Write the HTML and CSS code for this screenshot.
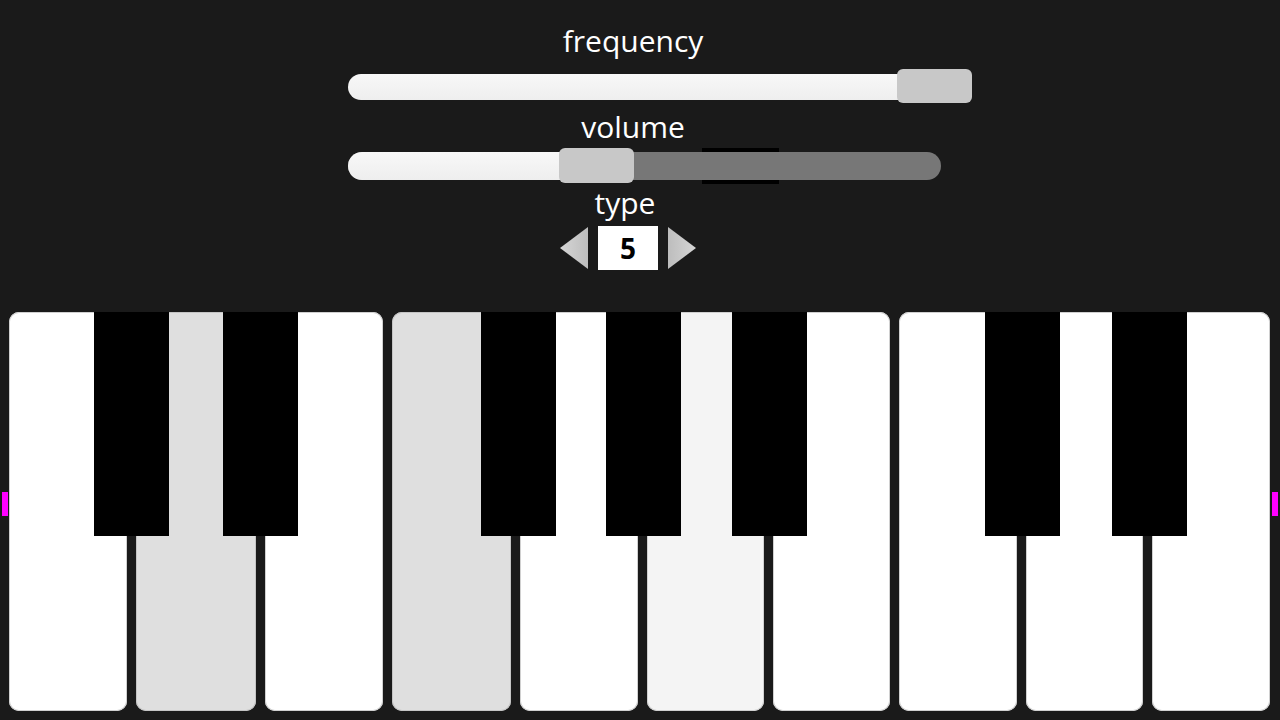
FILE: index.html
```html
<!DOCTYPE html>
<html>
<head>
<meta charset="utf-8">
<link rel="stylesheet" href="styles.css">
</head>
<body>
<div class="screen">
  <div class="controls">
    <div class="label label-freq">frequency</div>
    <div class="slider slider-freq">
      <div class="track track-freq"></div>
      <div class="handle handle-freq"></div>
    </div>
    <div class="label label-vol">volume</div>
    <div class="slider slider-vol">
      <div class="shadow-rect"></div>
      <div class="track track-vol"><div class="fill"></div></div>
      <div class="handle handle-vol"></div>
    </div>
    <div class="type-group">
      <div class="label label-type">type</div>
      <div class="type-row">
        <svg class="arrow" width="28" height="44" viewBox="0 0 28 44"><defs><linearGradient id="ga" x1="0" y1="0" x2="1" y2="0"><stop offset="0" stop-color="#d6d6d6"/><stop offset="1" stop-color="#bdbdbd"/></linearGradient></defs><polygon points="28,1 28,43 0,22" fill="url(#ga)"/></svg>
        <div class="type-box">5</div>
        <svg class="arrow" width="28" height="44" viewBox="0 0 28 44"><defs><linearGradient id="gb" x1="0" y1="0" x2="1" y2="0"><stop offset="0" stop-color="#bdbdbd"/><stop offset="1" stop-color="#d6d6d6"/></linearGradient></defs><polygon points="0,1 0,43 28,22" fill="url(#gb)"/></svg>
      </div>
    </div>
  </div>

  <div class="piano">
    <div class="white"></div>
    <div class="white gray"></div>
    <div class="white"></div>
    <div class="white gray"></div>
    <div class="white"></div>
    <div class="white light"></div>
    <div class="white"></div>
    <div class="white"></div>
    <div class="white"></div>
    <div class="white"></div>
    <div class="black b1"></div>
    <div class="black b2"></div>
    <div class="black b3"></div>
    <div class="black b4"></div>
    <div class="black b5"></div>
    <div class="black b6"></div>
    <div class="black b7"></div>
  </div>

  <div class="marker marker-left"></div>
  <div class="marker marker-right"></div>
</div>
</body>
</html>
```

FILE: styles.css
```css
html, body {
  margin: 0;
  padding: 0;
  background: #1a1a1a;
}
.screen {
  position: relative;
  width: 1280px;
  height: 720px;
  overflow: hidden;
  background: #1a1a1a;
  font-family: "Open Sans", "Noto Sans", sans-serif;
  color: #ffffff;
}
.controls {
  margin-left: 348px;
  width: 570px;
  padding-top: 24px;
  display: flex;
  flex-direction: column;
}
.label {
  height: 34px;
  line-height: 34px;
  font-size: 30px;
  text-align: center;
  white-space: nowrap;
}
.slider {
  position: relative;
}
.slider-freq {
  width: 624px;
  height: 35px;
  margin-top: 11px;
}
.track {
  position: relative;
  background: linear-gradient(#f8f8f8, #eeeeee);
}
.track-freq {
  margin-top: 5px;
  height: 26px;
  border-radius: 13px;
}
.handle {
  position: absolute;
  top: 0;
  width: 75px;
  background: #c8c8c8;
  border-radius: 6px;
}
.handle-freq {
  right: 0;
  height: 34px;
}
.label-vol {
  margin-top: 6px;
}
.slider-vol {
  width: 593px;
  height: 36px;
  margin-top: 4px;
}
.shadow-rect {
  position: absolute;
  left: 354px;
  top: 0;
  width: 77px;
  height: 36px;
  background: #000000;
}
.track-vol {
  margin-top: 4px;
  height: 28px;
  border-radius: 14px;
  background: #777777;
  overflow: hidden;
}
.fill {
  width: 217px;
  height: 100%;
  background: linear-gradient(#f8f8f8, #eeeeee);
}
.handle-vol {
  left: 211px;
  height: 35px;
}
.type-group {
  width: 560px;
  margin-top: 2px;
  display: flex;
  flex-direction: column;
  align-items: center;
}
.label-type {
  width: 100%;
  box-sizing: border-box;
  padding-right: 6px;
}
.type-row {
  margin-top: 6px;
  display: flex;
  align-items: center;
  gap: 10px;
  height: 44px;
}
.arrow {
  display: block;
}
.type-box {
  width: 60px;
  height: 44px;
  background: #ffffff;
  color: #000000;
  font-weight: 700;
  font-size: 28px;
  line-height: 44px;
  text-align: center;
}
.piano {
  position: relative;
  margin-top: 42px;
  margin-left: 9px;
  width: 1261px;
  height: 399px;
  display: grid;
  grid-template-columns: 118px 120px 118px 119px 118px 117px 117px 118px 117px 118px;
  column-gap: 9px;
}
.white {
  background: #ffffff;
  border-radius: 10px;
  box-shadow: inset 0 0 0 1px #d0d0d0;
}
.white.gray {
  background: #dfdfdf;
  box-shadow: inset 0 0 0 1px #c4c4c4;
}
.white.light {
  background: #f4f4f4;
}
.black {
  position: absolute;
  top: 0;
  width: 75px;
  height: 224px;
  background: #000000;
}
.b1 { left: 85px; }
.b2 { left: 214px; }
.b3 { left: 472px; }
.b4 { left: 597px; }
.b5 { left: 723px; }
.b6 { left: 976px; }
.b7 { left: 1103px; }
.marker {
  position: absolute;
  top: 492px;
  width: 6px;
  height: 24px;
  background: #ff00ff;
}
.marker-left { left: 2px; }
.marker-right { left: 1272px; }
```
